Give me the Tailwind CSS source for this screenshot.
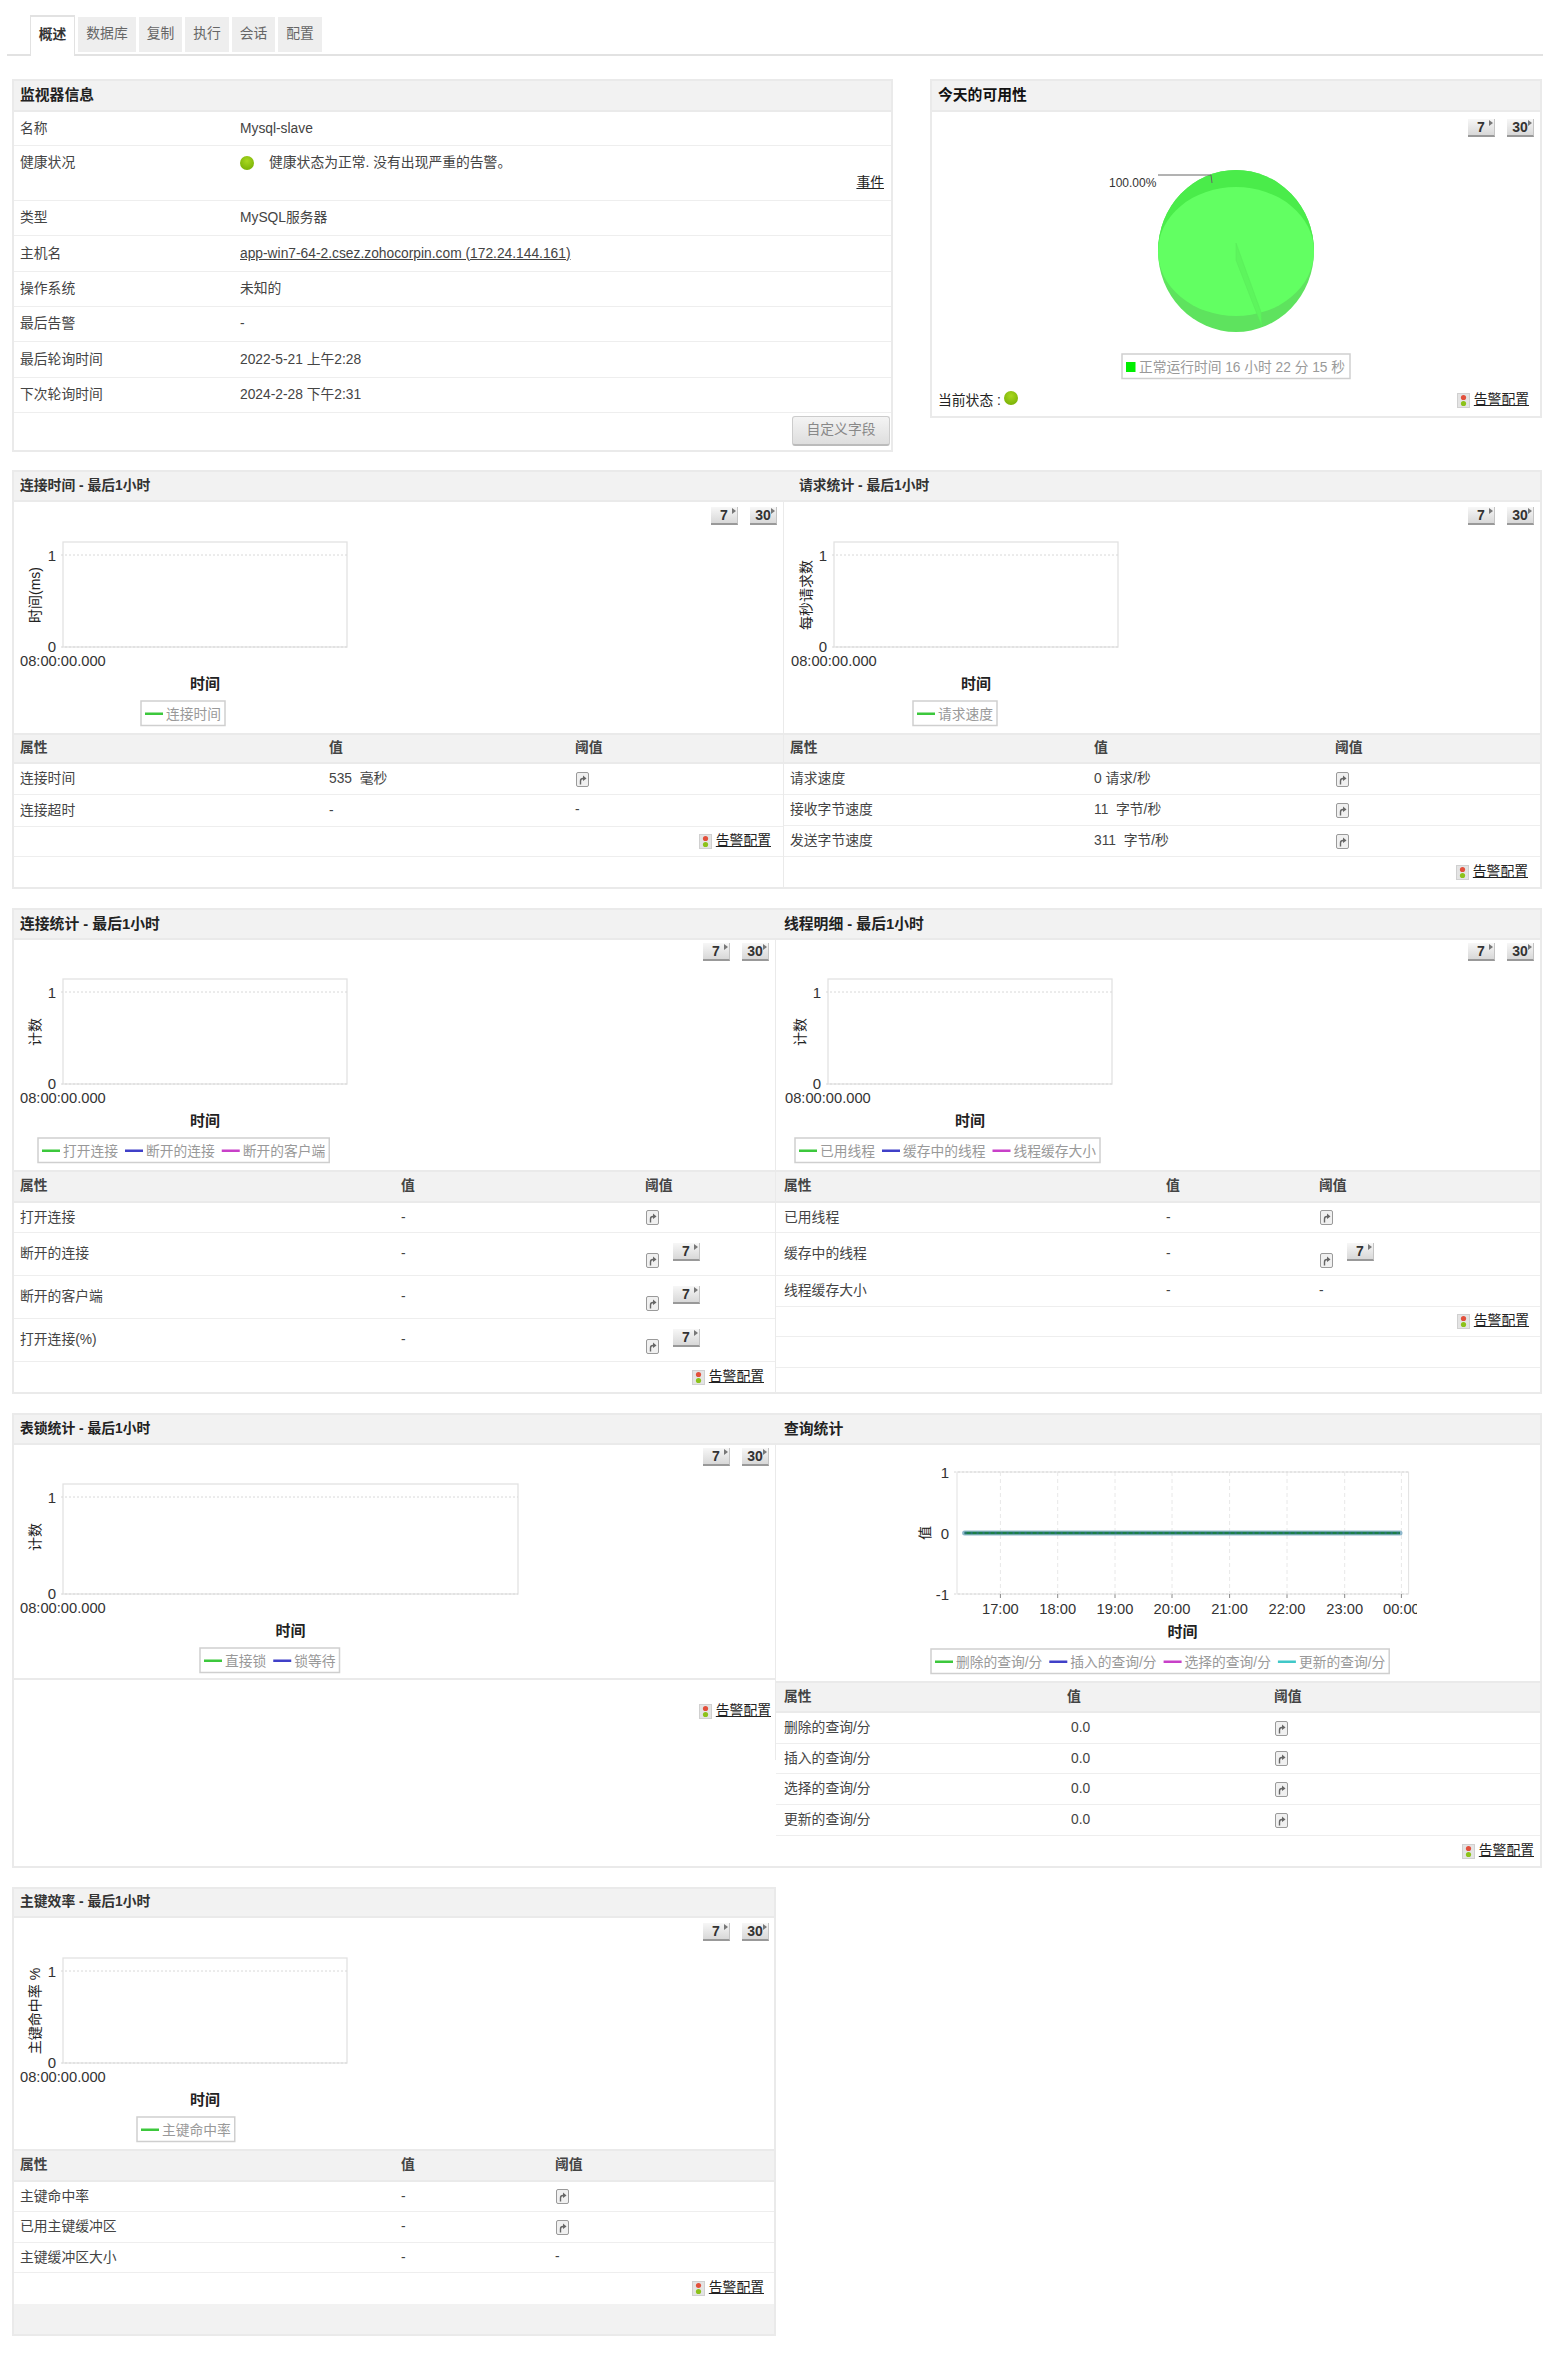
<!DOCTYPE html>
<html lang="zh-CN">

<head>
  <meta charset="UTF-8" />
  <title>Mysql-slave</title>
  <script src="https://cdn.jsdelivr.net/npm/@tailwindcss/browser@4"></script>
</head>

<body class="bg-white text-[13.8px] text-[#444] [font-family:'Liberation_Sans','Noto_Sans_CJK_SC',sans-serif]">
  <div class="ml-[7px] mt-[15px] w-[1536px] h-[41px] border-b-2 border-[#e2e2e2] pl-[23px] flex gap-[3px]">
    <div class="w-[45px] h-[41px] pb-[3px] bg-white border-x border-t-2 border-[#e2e2e2] flex items-center justify-center font-bold text-[#333]">概述</div>
    <div class="w-[58px] h-[35px] mt-[2px] bg-[#eeeeee] flex items-center justify-center text-[#666]">数据库</div>
    <div class="w-[43px] h-[35px] mt-[2px] bg-[#eeeeee] flex items-center justify-center text-[#666]">复制</div>
    <div class="w-[44px] h-[35px] mt-[2px] bg-[#eeeeee] flex items-center justify-center text-[#666]">执行</div>
    <div class="w-[43px] h-[35px] mt-[2px] bg-[#eeeeee] flex items-center justify-center text-[#666]">会话</div>
    <div class="w-[44px] h-[35px] mt-[2px] bg-[#eeeeee] flex items-center justify-center text-[#666]">配置</div>
  </div>

  <div id="page" class="ml-[12px] mt-[23px] w-[1530px]"></div>

  <script>
    const ICON = 'icon';
    const ICON7 = 'icon7';
    const LEGEND = { g: '#3cc83c', b: '#4040c8', m: '#c840c8', c: '#40c8c8' };

    const btn = (n) => `
      <span class="relative flex items-center justify-center w-[27px] h-[18px] pt-[1px] bg-gradient-to-b from-[#f7f7f7] to-[#d8d8d8] border-b-2 border-r border-b-[#999] border-r-[#c4c4c4] font-bold text-[14px] text-[#333]">${n}
        <svg class="absolute top-[1px] right-[1px]" width="4" height="6"><polygon points="0,0 4,3 0,6" fill="#777" /></svg>
      </span>`;

    const btnBar = (cls) => `<div class="flex justify-end gap-[12px] ${cls}">${btn(7)}${btn(30)}</div>`;

    const thrIcon = (cls = '') => `
      <svg class="shrink-0 ${cls}" width="15" height="15" viewBox="0 0 15 15">
        <rect x="1.5" y="0.5" width="12" height="14" rx="1.5" fill="#f0f0f0" stroke="#9a9a9a" />
        <path d="M5.5 12.5 V9 Q5.5 6.5 8 6.5" fill="none" stroke="#666" stroke-width="1.4" />
        <polygon points="8,3.5 11.5,6.5 8,9" fill="#666" />
      </svg>`;

    const alertLink = (cls) => `
      <div class="flex items-center justify-end gap-[4px] text-[#222] ${cls}">
        <svg width="13" height="15" viewBox="0 0 13 15">
          <rect x="0.5" y="0.5" width="12" height="14" fill="#e4e4e4" stroke="#d0d0d0" />
          <circle cx="6.5" cy="4.5" r="2.6" fill="#e2503c" />
          <circle cx="6.5" cy="10.5" r="2.6" fill="#8cc21a" />
        </svg>
        <a class="underline">告警配置</a>
      </div>`;

    const textW = (s) => [...s].reduce((w, c) => w + (c.charCodeAt(0) > 255 ? 13.75 : 3.8), 0);

    const legend = (x, y, items) => {
      let cur = x + 4;
      let out = '';
      items.forEach(([color, label]) => {
        out += `<rect x="${cur}" y="${y + 11.5}" width="18" height="2.5" fill="${color}" />`;
        out += `<text x="${cur + 21}" y="${y + 17.5}" font-size="13.75" fill="#999">${label}</text>`;
        cur += 21 + textW(label) + 7;
      });
      const w = cur - 3 - x;
      return `<rect x="${x}" y="${y}" width="${w}" height="24.5" fill="#fff" stroke="#cfcfcf" stroke-width="1.5" />${out}`;
    };

    // x0/y0: top-left of the plot box, inside the svg
    const chart = ({ w, h, x0, y0, boxW, boxH = 105, yLabel, legX, items }) => `
      <svg class="block" width="${w}" height="${h}">
        <rect x="${x0}" y="${y0}" width="${boxW}" height="${boxH}" fill="#fff" stroke="#e2e2e2" stroke-width="1.3" />
        <line x1="${x0 - 2}" x2="${x0 + boxW}" y1="${y0 + 13}" y2="${y0 + 13}" stroke="#d8d8d8" stroke-dasharray="2 2" />
        <line x1="${x0 - 2}" x2="${x0 + boxW}" y1="${y0 + boxH}" y2="${y0 + boxH}" stroke="#d8d8d8" stroke-dasharray="2 2" />
        <text x="${x0 - 7}" y="${y0 + 19}" font-size="15" text-anchor="end" fill="#333">1</text>
        <text x="${x0 - 7}" y="${y0 + boxH + 5}" font-size="15" text-anchor="end" fill="#333">0</text>
        <text x="${x0 - 43}" y="${y0 + boxH + 19}" font-size="14.7" fill="#333">08:00:00.000</text>
        <text x="${x0 + boxW / 2}" y="${y0 + boxH + 42}" font-size="15" font-weight="bold" text-anchor="middle" fill="#222">时间</text>
        <text transform="translate(${x0 - 23} ${y0 + 53}) rotate(-90)" font-size="14" text-anchor="middle" fill="#222">${yLabel}</text>
        ${legend(legX, y0 + boxH + 54, items)}
      </svg>`;

    const table = ({ cols, pad, head, headCls, rows }) => `
      <div class="grid ${cols} ${pad} items-center ${headCls} bg-[#f2f2f2] border-y-2 border-[#eaeaea] font-bold text-[#444]">
        ${head.map((t) => `<div>${t}</div>`).join('')}
      </div>
      ${rows.map(([a, v, t, cls]) => {
        if (a === 'alert') return `<div class="flex items-center justify-end ${cls} border-b border-[#eeeeee]">${alertLink(v)}</div>`;
        if (a === 'empty') return `<div class="${cls} border-b border-[#eeeeee]"></div>`;
        let thr = `<div>${t}</div>`;
        if (t === ICON) thr = thrIcon();
        if (t === ICON7) thr = `<div class="flex gap-[13px] h-full">${thrIcon('mt-[20px]')}<div class="mt-[10px]">${btn(7)}</div></div>`;
        return `<div class="grid ${cols} ${pad} items-center ${cls} border-b border-[#eeeeee]"><div class="pt-[1px]">${a}</div><div class="pt-[1px]">${v}</div>${t === ICON7 ? thr : `<div>${thr}</div>`}</div>`;
      }).join('')}`;

    const info = [
      ['名称', 'Mysql-slave', 'h-[34px]'],
      ['类型', 'MySQL服务器', 'h-[35px]'],
      ['主机名', '<a class="underline">app-win7-64-2.csez.zohocorpin.com (172.24.144.161)</a>', 'h-[36px]'],
      ['操作系统', '未知的', 'h-[35px]'],
      ['最后告警', '-', 'h-[35px]'],
      ['最后轮询时间', '2022-5-21 上午2:28', 'h-[36px]'],
      ['下次轮询时间', '2024-2-28 下午2:31', 'h-[35px]'],
    ];
    const infoRow = ([a, v, cls]) => `
      <div class="flex items-center pt-[1px] ${cls} border-b border-[#eeeeee]">
        <div class="w-[226px] pl-[6px]">${a}</div><div>${v}</div>
      </div>`;

    const row1 = `
      <div class="flex justify-between">
        <div class="w-[881px] h-[373px] border-2 border-[#eaeaea]">
          <div class="h-[31px] flex items-center pl-[6px] bg-[#f2f2f2] border-b-2 border-[#eaeaea] text-[14.8px] font-bold text-[#222]">监视器信息</div>
          ${infoRow(info[0])}
          <div class="relative h-[55px] border-b border-[#eeeeee]">
            <div class="flex h-[35px] items-center">
              <div class="w-[226px] pl-[6px]">健康状况</div>
              <span class="w-[14px] h-[14px] -mt-[2px] rounded-full bg-[radial-gradient(circle_at_50%_35%,#a8d820,#6fa800)]"></span>
              <span class="ml-[15px]">健康状态为正常. 没有出现严重的告警。</span>
            </div>
            <a class="absolute right-[7px] top-[27px] underline text-[#222]">事件</a>
          </div>
          ${info.slice(1).map(infoRow).join('')}
          <div class="flex justify-end pt-[3px] pr-[1px]">
            <div class="w-[98px] h-[30px] flex items-center justify-center rounded-[3px] bg-gradient-to-b from-[#f4f4f4] to-[#dedede] border border-[#cccccc] border-b-2 border-b-[#bbbbbb] text-[#888]">自定义字段</div>
          </div>
        </div>

        <div class="w-[612px] h-[339px] border-2 border-[#eaeaea]">
          <div class="h-[31px] flex items-center pl-[6px] bg-[#f2f2f2] border-b-2 border-[#eaeaea] text-[14.8px] font-bold text-[#111]">今天的可用性</div>
          ${btnBar('pt-[7px] pr-[6px] h-[28px]')}
          <svg class="block" width="608" height="245">
            <ellipse cx="304" cy="111" rx="78" ry="81" fill="#5ee35e" />
            <path d="M226 111 A78 81 0 0 1 382 111 Z" fill="#4aec4a" />
            <ellipse cx="304" cy="111.5" rx="78" ry="64.5" fill="#62ff62" />
            <polygon points="304,103 329,172 330,187 304,120" fill="#5df55d" stroke="#5be85b" stroke-width="0.5" />
            <text x="177" y="47" font-size="12" fill="#333">100.00%</text>
            <polyline points="226,35 279,35 280,43" fill="none" stroke="#666" />
            <rect x="190" y="214" width="228" height="24.5" fill="#fff" stroke="#cfcfcf" stroke-width="1.5" />
            <rect x="194" y="222" width="9.5" height="10" fill="#00ee00" />
            <text x="207" y="232" font-size="13.75" fill="#999" textLength="206">正常运行时间 16 小时 22 分 15 秒</text>
          </svg>
          <div class="flex items-center justify-between h-[31px] pl-[6px] pr-[11px]">
            <div class="flex items-center gap-[3px] pt-[1px] text-[#222]">当前状态 :
              <span class="w-[14px] h-[14px] -mt-[6px] rounded-full bg-[radial-gradient(circle_at_50%_35%,#a8d820,#6fa800)]"></span>
            </div>
            ${alertLink('')}
          </div>
        </div>
      </div>`;

    const row2 = `
      <div class="mt-[18px] w-[1530px] border-2 border-[#eaeaea]">
        <div class="h-[30px] flex items-center bg-[#f2f2f2] border-b-2 border-[#eaeaea] font-bold text-[#333]">
          <div class="w-[770px] pl-[6px]">连接时间 - 最后1小时</div><div class="pl-[15px]">请求统计 - 最后1小时</div>
        </div>
        <div class="flex">
          <div class="w-[770px] border-r border-[#eaeaea]">
            <div class="h-[231px]">
              ${btnBar('pt-[5px] pr-[6px] h-[23px]')}
              ${chart({ w: 769, h: 208, x0: 49, y0: 17, boxW: 284, yLabel: '时间(ms)', legX: 127, items: [[LEGEND.g, '连接时间']] })}
            </div>
            ${table({
              cols: 'grid-cols-[309px_246px_1fr]', pad: 'pl-[6px]', head: ['属性', '值', '阈值'], headCls: 'h-[31px]',
              rows: [['连接时间', '535&nbsp;&nbsp;毫秒', ICON, 'h-[31px]'], ['连接超时', '-', '-', 'h-[32px]'], ['alert', 'pr-[12px]', '', 'h-[30px]'], ['empty', '', '', 'h-[30px] border-b-0']],
            })}
          </div>
          <div class="w-[756px]">
            <div class="h-[231px]">
              ${btnBar('pt-[5px] pr-[6px] h-[23px]')}
              ${chart({ w: 756, h: 208, x0: 50, y0: 17, boxW: 284, yLabel: '每秒请求数', legX: 129, items: [[LEGEND.g, '请求速度']] })}
            </div>
            ${table({
              cols: 'grid-cols-[304px_241px_1fr]', pad: 'pl-[6px]', head: ['属性', '值', '阈值'], headCls: 'h-[31px]',
              rows: [['请求速度', '0 请求/秒', ICON, 'h-[31px]'], ['接收字节速度', '11&nbsp;&nbsp;字节/秒', ICON, 'h-[31px]'], ['发送字节速度', '311&nbsp;&nbsp;字节/秒', ICON, 'h-[31px]'], ['alert', 'pr-[12px]', '', 'h-[30px] border-b-0']],
            })}
          </div>
        </div>
      </div>`;

    const row3 = `
      <div class="mt-[19px] w-[1530px] border-2 border-[#eaeaea]">
        <div class="h-[30px] flex items-center bg-[#f2f2f2] border-b-2 border-[#eaeaea] text-[14.8px] font-bold text-[#222]">
          <div class="w-[762px] pl-[6px]">连接统计 - 最后1小时</div><div class="pl-[8px]">线程明细 - 最后1小时</div>
        </div>
        <div class="flex">
          <div class="w-[762px] border-r border-[#eaeaea]">
            <div class="h-[230px]">
              ${btnBar('pt-[3px] pr-[6px] h-[21px]')}
              ${chart({ w: 761, h: 209, x0: 49, y0: 18, boxW: 284, yLabel: '计数', legX: 24, items: [[LEGEND.g, '打开连接'], [LEGEND.b, '断开的连接'], [LEGEND.m, '断开的客户端']] })}
            </div>
            ${table({
              cols: 'grid-cols-[381px_244px_1fr]', pad: 'pl-[6px]', head: ['属性', '值', '阈值'], headCls: 'h-[33px]',
              rows: [['打开连接', '-', ICON, 'h-[30px]'], ['断开的连接', '-', ICON7, 'h-[43px]'], ['断开的客户端', '-', ICON7, 'h-[43px]'], ['打开连接(%)', '-', ICON7, 'h-[43px]'], ['alert', 'pr-[11px]', '', 'h-[30px] border-b-0']],
            })}
          </div>
          <div class="w-[764px]">
            <div class="h-[230px]">
              ${btnBar('pt-[3px] pr-[6px] h-[21px]')}
              ${chart({ w: 764, h: 209, x0: 52, y0: 18, boxW: 284, yLabel: '计数', legX: 19, items: [[LEGEND.g, '已用线程'], [LEGEND.b, '缓存中的线程'], [LEGEND.m, '线程缓存大小']] })}
            </div>
            ${table({
              cols: 'grid-cols-[382px_153px_1fr]', pad: 'pl-[8px]', head: ['属性', '值', '阈值'], headCls: 'h-[33px]',
              rows: [['已用线程', '-', ICON, 'h-[30px]'], ['缓存中的线程', '-', ICON7, 'h-[43px]'], ['线程缓存大小', '-', '-', 'h-[31px]'], ['alert', 'pr-[11px]', '', 'h-[30px]'], ['empty', '', '', 'h-[31px]'], ['empty', '', '', 'h-[24px] border-b-0']],
            })}
          </div>
        </div>
      </div>`;

    const hours = [[224.4, '17:00'], [281.7, '18:00'], [339, '19:00'], [396, '20:00'], [453.6, '21:00'], [511, '22:00'], [568.7, '23:00'], [625.4, '00:00']];
    const queryChart = `
      <svg class="block" width="764" height="236">
        <defs><clipPath id="q"><rect width="641" height="236" /></clipPath></defs>
        <rect x="181" y="27" width="451.6" height="122" fill="#fff" stroke="#e2e2e2" />
        ${hours.map(([x]) => `<line x1="${x}" x2="${x}" y1="27" y2="149" stroke="#e8e8e8" stroke-dasharray="4 3" /><line x1="${x}" x2="${x}" y1="149" y2="153" stroke="#888" />`).join('')}
        <line x1="178" x2="632" y1="27" y2="27" stroke="#d8d8d8" stroke-dasharray="2 2" />
        <line x1="178" x2="632" y1="149" y2="149" stroke="#d8d8d8" stroke-dasharray="2 2" />
        <text x="173" y="33" font-size="15" text-anchor="end" fill="#333">1</text>
        <text x="173" y="94" font-size="15" text-anchor="end" fill="#333">0</text>
        <text x="173" y="155" font-size="15" text-anchor="end" fill="#333">-1</text>
        <text transform="translate(149 88) rotate(-90)" y="0" font-size="14" text-anchor="middle" dominant-baseline="central" fill="#222">值</text>
        <line x1="188.6" x2="624" y1="88" y2="88" stroke="#8fb8cc" stroke-width="5" stroke-linecap="round" />
        <line x1="188.6" x2="624" y1="88" y2="88" stroke="#1c7f46" stroke-width="2.5" />
        <line x1="188.6" x2="624" y1="88" y2="88" stroke="#2f6f8f" stroke-width="1.5" stroke-dasharray="2 4" />
        <g clip-path="url(#q)">
          ${hours.map(([x, t]) => `<text x="${x}" y="169" font-size="14.7" text-anchor="middle" fill="#333">${t}</text>`).join('')}
        </g>
        <text x="406.5" y="192" font-size="15" font-weight="bold" text-anchor="middle" fill="#222">时间</text>
        ${legend(155, 204, [[LEGEND.g, '删除的查询/分'], [LEGEND.b, '插入的查询/分'], [LEGEND.m, '选择的查询/分'], [LEGEND.c, '更新的查询/分']])}
      </svg>`;

    const row4 = `
      <div class="mt-[19px] w-[1530px] border-2 border-[#eaeaea]">
        <div class="h-[30px] flex items-center bg-[#f2f2f2] border-b-2 border-[#eaeaea] font-bold text-[#222]">
          <div class="w-[762px] pl-[6px]">表锁统计 - 最后1小时</div><div class="pl-[8px] text-[14.8px]">查询统计</div>
        </div>
        <div class="flex items-start">
          <div class="w-[762px] h-[315px] border-r border-[#eaeaea]">
            <div class="h-[235px] border-b-2 border-[#eaeaea]">
              ${btnBar('pt-[3px] pr-[6px] h-[21px]')}
              ${chart({ w: 761, h: 212, x0: 49, y0: 18, boxW: 455, boxH: 110, yLabel: '计数', legX: 186, items: [[LEGEND.g, '直接锁'], [LEGEND.b, '锁等待']] })}
            </div>
            ${alertLink('pt-[21px] pr-[4px]')}
          </div>
          <div class="w-[764px]">
            <div class="h-[236px]">${queryChart}</div>
            ${table({
              cols: 'grid-cols-[283px_207px_1fr]', pad: 'pl-[8px]', head: ['属性', '值', '阈值'], headCls: 'h-[32px]',
              rows: [['删除的查询/分', '<span class="pl-[4px]">0.0</span>', ICON, 'h-[31px]'], ['插入的查询/分', '<span class="pl-[4px]">0.0</span>', ICON, 'h-[30px]'], ['选择的查询/分', '<span class="pl-[4px]">0.0</span>', ICON, 'h-[31px]'], ['更新的查询/分', '<span class="pl-[4px]">0.0</span>', ICON, 'h-[31px]'], ['alert', 'pr-[6px]', '', 'h-[30px] border-b-0']],
            })}
          </div>
        </div>
      </div>`;

    const row5 = `
      <div class="mt-[19px] w-[764px] border-2 border-[#eaeaea]">
        <div class="h-[29px] flex items-center pl-[6px] bg-[#f2f2f2] border-b-2 border-[#eaeaea] font-bold text-[#333]">主键效率 - 最后1小时</div>
        <div class="h-[231px]">
          ${btnBar('pt-[5px] pr-[5px] h-[23px]')}
          ${chart({ w: 760, h: 208, x0: 49, y0: 17, boxW: 284, yLabel: '主键命中率 %', legX: 123, items: [[LEGEND.g, '主键命中率']] })}
        </div>
        ${table({
          cols: 'grid-cols-[381px_154px_1fr]', pad: 'pl-[6px]', head: ['属性', '值', '阈值'], headCls: 'h-[33px]',
          rows: [['主键命中率', '-', ICON, 'h-[30px]'], ['已用主键缓冲区', '-', ICON, 'h-[31px]'], ['主键缓冲区大小', '-', '-', 'h-[30px]'], ['alert', 'pr-[10px]', '', 'h-[31px] border-b-0']],
        })}
        <div class="h-[30px] bg-[#f2f2f2]"></div>
      </div>`;

    document.getElementById('page').innerHTML = row1 + row2 + row3 + row4 + row5;
  </script>
</body>

</html>
